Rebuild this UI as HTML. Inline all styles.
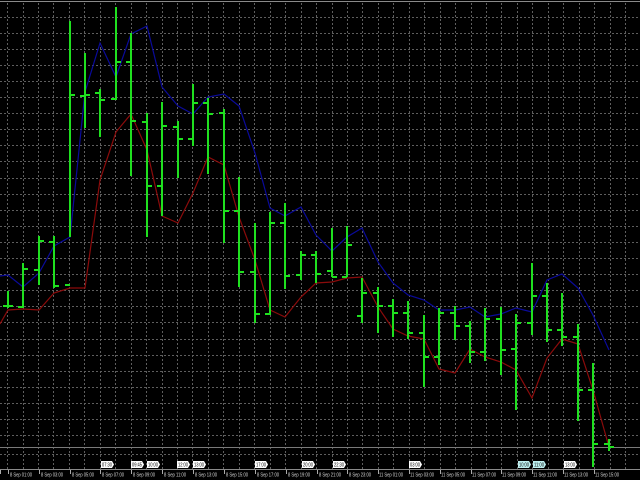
<!DOCTYPE html>
<html><head><meta charset="utf-8"><style>
html,body{margin:0;padding:0;background:#000;width:640px;height:480px;overflow:hidden}
svg{display:block}
</style></head><body>
<svg width="640" height="480" viewBox="0 0 640 480" xmlns="http://www.w3.org/2000/svg">
<rect width="640" height="480" fill="#000"/>
<line x1="0" y1="1.5" x2="640" y2="1.5" stroke="#8a8a8a" stroke-width="1"/>
<g stroke="#5e5e5e" stroke-width="1" stroke-dasharray="2 2">
<path d="M0 17.5H640M0 33.5H640M0 49.5H640M0 65.5H640M0 81.5H640M0 97.5H640M0 113.5H640M0 129.5H640M0 145.5H640M0 161.5H640M0 178.5H640M0 194.5H640M0 210.5H640M0 226.5H640M0 242.5H640M0 258.5H640M0 274.5H640M0 290.5H640M0 306.5H640M0 322.5H640M0 339.5H640M0 355.5H640M0 371.5H640M0 387.5H640M0 403.5H640M0 419.5H640M0 435.5H640M0 454.5H640"/>
<path d="M7.5 3V469M23.5 3V469M38.5 3V469M53.5 3V469M69.5 3V469M84.5 3V469M100.5 3V469M115.5 3V469M131.5 3V469M146.5 3V469M162.5 3V469M177.5 3V469M192.5 3V469M208.5 3V469M223.5 3V469M239.5 3V469M254.5 3V469M270.5 3V469M285.5 3V469M301.5 3V469M316.5 3V469M332.5 3V469M347.5 3V469M362.5 3V469M378.5 3V469M393.5 3V469M409.5 3V469M424.5 3V469M440.5 3V469M455.5 3V469M471.5 3V469M486.5 3V469M501.5 3V469M517.5 3V469M532.5 3V469M548.5 3V469M563.5 3V469M579.5 3V469M594.5 3V469M610.5 3V469M625.5 3V469"/>
</g>
<line x1="0" y1="447.5" x2="640" y2="447.5" stroke="#7a7a7a" stroke-width="1"/>
<line x1="0" y1="469.5" x2="640" y2="469.5" stroke="#8a8a8a" stroke-width="1"/>

<polyline fill="none" stroke="#8b0b0b" stroke-width="1.2" points="0,324 8,310 23,309 39,310 54,293 70,288 85,288 100,180 116,132 131,114 147,150 162,216 178,223 193,193 208,157 224,165 239,217 255,260 270,310 285,317 301,297 316,283 332,282 347,278 362,277 378,307 393,329 408,336 424,339 439,369 455,373 470,349 485,357 501,362 516,370 532,398 547,358 562,339 578,344 593,390 609,447"/>
<polyline fill="none" stroke="#0a0a9a" stroke-width="1.2" points="0,276 8,275 23,287 39,273 54,246 70,237 85,92 100,43 116,77 131,34 147,26 162,87 178,106 193,114 208,97 224,94 239,106 255,153 270,208 285,216 301,207 316,235 332,251 347,237 362,228 378,262 393,283 408,295 424,300 439,310 455,310 470,307 485,317 501,314 516,308 532,312 547,280 562,274 578,288 593,315 609,350"/>

<g stroke="#1fe01f" stroke-width="2" fill="none">
<path d="M8 291V308M3 306H8M8 306H13"/>
<path d="M23 263V308M18 307H23M23 269H28"/>
<path d="M39 236V285M34 270H39M39 241H44"/>
<path d="M54 236V288M49 242H54M54 286H59"/>
<path d="M70 21V237M65 285H70M70 95H75"/>
<path d="M85 53V128M80 96H85M85 95H90"/>
<path d="M100 89V137M95 93H100M100 100H105"/>
<path d="M116 7V100M111 99H116M116 62H121"/>
<path d="M131 33V176M126 62H131M131 121H136"/>
<path d="M147 113V237M142 122H147M147 186H152"/>
<path d="M162 102V216M157 186H162M162 126H167"/>
<path d="M178 121V178M173 127H178M178 139H183"/>
<path d="M193 84V146M188 139H193M193 103H198"/>
<path d="M208 98V174M203 103H208M208 114H213"/>
<path d="M224 109V243M219 113H224M224 211H229"/>
<path d="M239 177V287M234 211H239M239 272H244"/>
<path d="M255 223V323M250 272H255M255 314H260"/>
<path d="M270 212V315M265 314H270M270 223H275"/>
<path d="M285 203V289M280 223H285M285 276H290"/>
<path d="M301 251V280M296 275H301M301 255H306"/>
<path d="M316 251V283M311 255H316M316 274H321"/>
<path d="M332 228V277M327 271H332M332 277H337"/>
<path d="M347 226V277M342 277H347M347 245H352"/>
<path d="M362 278V323M357 316H362M362 293H367"/>
<path d="M378 287V333M373 293H378M378 306H383"/>
<path d="M393 299V337M388 306H393M393 313H398"/>
<path d="M408 301V339M403 313H408M408 333H413"/>
<path d="M424 315V387M419 333H424M424 357H429"/>
<path d="M439 308V365M434 357H439M439 313H444"/>
<path d="M455 306V340M450 313H455M455 326H460"/>
<path d="M470 321V363M465 326H470M470 352H475"/>
<path d="M485 308V361M480 352H485M485 319H490"/>
<path d="M501 307V375M496 319H501M501 350H506"/>
<path d="M516 314V410M511 349H516M516 323H521"/>
<path d="M532 263V335M527 323H532M532 296H537"/>
<path d="M547 283V342M542 296H547M547 330H552"/>
<path d="M562 293V346M557 330H562M562 337H567"/>
<path d="M578 324V421M573 337H578M578 390H583"/>
<path d="M593 363V467M588 390H593M593 444H598"/>
<path d="M609 439V451M604 444H609M609 447H614"/>
</g>

<g font-family="Liberation Sans, sans-serif" font-size="5" fill="#000">
<g fill="#fff" stroke="none">
<path d="M101 461H112L114 464.5L112 468H101Z"/>
<path d="M131 461H142L144 464.5L142 468H131Z"/>
<path d="M147 461H158L160 464.5L158 468H147Z"/>
<path d="M177 461H188L190 464.5L188 468H177Z"/>
<path d="M193 461H204L206 464.5L204 468H193Z"/>
<path d="M255 461H266L268 464.5L266 468H255Z"/>
<path d="M302 461H313L315 464.5L313 468H302Z"/>
<path d="M333 461H344L346 464.5L344 468H333Z"/>
<path d="M409 461H420L422 464.5L420 468H409Z"/>
<path d="M564 461H575L577 464.5L575 468H564Z"/>
</g>
<g fill="#bff0f0">
<path d="M518 461H529L531 464.5L529 468H518Z"/>
<path d="M533 461H544L546 464.5L544 468H533Z"/>
</g>
<text x="102" y="466.5" textLength="10" lengthAdjust="spacingAndGlyphs">07:30</text>
<text x="132" y="466.5" textLength="10" lengthAdjust="spacingAndGlyphs">09:45</text>
<text x="148" y="466.5" textLength="10" lengthAdjust="spacingAndGlyphs">10:00</text>
<text x="178" y="466.5" textLength="10" lengthAdjust="spacingAndGlyphs">12:00</text>
<text x="194" y="466.5" textLength="10" lengthAdjust="spacingAndGlyphs">13:00</text>
<text x="256" y="466.5" textLength="10" lengthAdjust="spacingAndGlyphs">17:00</text>
<text x="303" y="466.5" textLength="10" lengthAdjust="spacingAndGlyphs">20:00</text>
<text x="334" y="466.5" textLength="10" lengthAdjust="spacingAndGlyphs">22:30</text>
<text x="410" y="466.5" textLength="10" lengthAdjust="spacingAndGlyphs">03:00</text>
<text x="519" y="466.5" textLength="10" lengthAdjust="spacingAndGlyphs">10:00</text>
<text x="534" y="466.5" textLength="10" lengthAdjust="spacingAndGlyphs">11:00</text>
<text x="565" y="466.5" textLength="10" lengthAdjust="spacingAndGlyphs">13:00</text>
</g>

<g stroke="#aaa" stroke-width="1">
<path d="M8.5 470V474M39.5 470V474M70.5 470V474M100.5 470V474M131.5 470V474M162.5 470V474M193.5 470V474M224.5 470V474M255.5 470V474M286.5 470V474M317.5 470V474M347.5 470V474M378.5 470V474M409.5 470V474M440.5 470V474M471.5 470V474M501.5 470V474M532.5 470V474M563.5 470V474M594.5 470V474M0.5 470V474"/>
</g>
<g font-family="Liberation Sans, sans-serif" font-size="5" fill="#d8d8d8" lengthAdjust="spacingAndGlyphs">
<text x="10" y="476.5" textLength="22" lengthAdjust="spacingAndGlyphs">8 Sep 01:00</text>
<text x="41" y="476.5" textLength="22" lengthAdjust="spacingAndGlyphs">8 Sep 03:00</text>
<text x="72" y="476.5" textLength="22" lengthAdjust="spacingAndGlyphs">8 Sep 05:00</text>
<text x="102" y="476.5" textLength="22" lengthAdjust="spacingAndGlyphs">8 Sep 07:00</text>
<text x="133" y="476.5" textLength="22" lengthAdjust="spacingAndGlyphs">8 Sep 09:00</text>
<text x="164" y="476.5" textLength="22" lengthAdjust="spacingAndGlyphs">8 Sep 11:00</text>
<text x="195" y="476.5" textLength="22" lengthAdjust="spacingAndGlyphs">8 Sep 13:00</text>
<text x="226" y="476.5" textLength="22" lengthAdjust="spacingAndGlyphs">8 Sep 15:00</text>
<text x="257" y="476.5" textLength="22" lengthAdjust="spacingAndGlyphs">8 Sep 17:00</text>
<text x="288" y="476.5" textLength="22" lengthAdjust="spacingAndGlyphs">8 Sep 19:00</text>
<text x="319" y="476.5" textLength="22" lengthAdjust="spacingAndGlyphs">8 Sep 21:00</text>
<text x="349" y="476.5" textLength="22" lengthAdjust="spacingAndGlyphs">8 Sep 23:00</text>
<text x="379" y="476.5" textLength="24" lengthAdjust="spacingAndGlyphs">11 Sep 01:00</text>
<text x="410" y="476.5" textLength="24" lengthAdjust="spacingAndGlyphs">11 Sep 03:00</text>
<text x="441" y="476.5" textLength="24" lengthAdjust="spacingAndGlyphs">11 Sep 05:00</text>
<text x="472" y="476.5" textLength="24" lengthAdjust="spacingAndGlyphs">11 Sep 07:00</text>
<text x="502" y="476.5" textLength="24" lengthAdjust="spacingAndGlyphs">11 Sep 09:00</text>
<text x="533" y="476.5" textLength="24" lengthAdjust="spacingAndGlyphs">11 Sep 11:00</text>
<text x="564" y="476.5" textLength="24" lengthAdjust="spacingAndGlyphs">11 Sep 13:00</text>
<text x="595" y="476.5" textLength="24" lengthAdjust="spacingAndGlyphs">11 Sep 15:00</text>
</g>
</svg>
</body></html>
